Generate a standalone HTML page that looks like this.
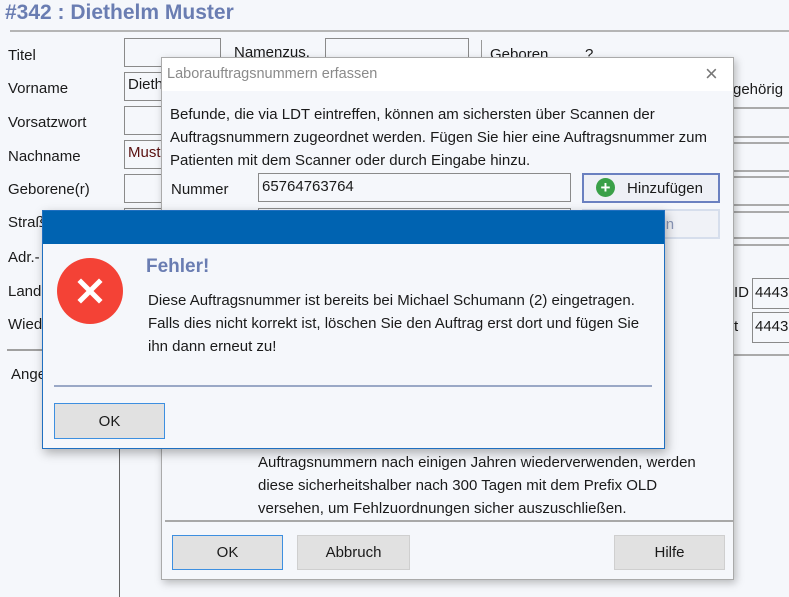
<!DOCTYPE html>
<html><head><meta charset="utf-8"><style>
*{margin:0;padding:0;box-sizing:border-box}
body{width:789px;height:597px;overflow:hidden;background:#f5f7fb;font-family:"Liberation Sans",sans-serif;font-size:15px;color:#1a1a1a;position:relative}
.a{position:absolute;white-space:nowrap}
.box{position:absolute;border:1px solid #8a8a8a;background:#f5f7fb}
.hl{position:absolute;height:2px;background:#c8c8c8}
.btn{position:absolute;background:#e1e1e1;border:1px solid #cfcfcf;text-align:center;font-size:15px}
</style></head><body>
<div class="a" style="left:5px;top:1px;font-size:21px;font-weight:bold;color:#6a7db2">#342 : Diethelm Muster</div>
<div class="hl" style="left:10px;top:30px;width:779px;background:#b5b5b5"></div>
<div class="a" style="left:8px;top:47px">Titel</div>
<div class="a" style="left:8px;top:80px">Vorname</div>
<div class="a" style="left:8px;top:114px">Vorsatzwort</div>
<div class="a" style="left:8px;top:148px">Nachname</div>
<div class="a" style="left:8px;top:181px">Geborene(r)</div>
<div class="a" style="left:8px;top:214px">Straße</div>
<div class="a" style="left:8px;top:249px">Adr.-</div>
<div class="a" style="left:8px;top:283px">Land</div>
<div class="a" style="left:8px;top:316px">Wied</div>
<div class="hl" style="left:7px;top:349px;width:40px;background:#a0a0a0"></div>
<div class="a" style="left:11px;top:366px">Angeb</div>
<div style="position:absolute;left:119px;top:350px;width:1px;height:247px;background:#666"></div>
<div class="box" style="left:124px;top:38px;width:97px;height:29px"></div>
<div class="box" style="left:124px;top:72px;width:97px;height:29px;padding:3px">Diethelm</div>
<div class="box" style="left:124px;top:106px;width:97px;height:29px"></div>
<div class="box" style="left:124px;top:140px;width:97px;height:29px;padding:3px;color:#5a1010">Muster</div>
<div class="box" style="left:124px;top:174px;width:97px;height:29px"></div>
<div class="box" style="left:124px;top:208px;width:97px;height:29px"></div>
<div class="a" style="left:234px;top:44px">Namenzus.</div>
<div class="box" style="left:325px;top:38px;width:144px;height:29px"></div>
<div style="position:absolute;left:481px;top:40px;width:1px;height:26px;background:#999"></div>
<div class="a" style="left:490px;top:46px">Geboren</div><div class="a" style="left:585px;top:46px">?</div>
<div class="a" style="left:733px;top:81px">gehörig</div>
<div class="hl" style="left:734px;top:107px;width:55px;background:#aaa"></div>
<div class="hl" style="left:734px;top:136px;width:55px;background:#aaa"></div>
<div class="hl" style="left:734px;top:142px;width:55px;background:#aaa"></div>
<div class="hl" style="left:734px;top:170px;width:55px;background:#aaa"></div>
<div class="hl" style="left:734px;top:176px;width:55px;background:#aaa"></div>
<div class="hl" style="left:734px;top:204px;width:55px;background:#aaa"></div>
<div class="hl" style="left:734px;top:211px;width:55px;background:#aaa"></div>
<div class="hl" style="left:734px;top:237px;width:55px;background:#aaa"></div>
<div class="hl" style="left:734px;top:244px;width:55px;background:#aaa"></div>
<div class="a" style="left:734px;top:284px">ID</div>
<div class="box" style="left:752px;top:278px;width:40px;height:31px;padding:5px 2px">4443</div>
<div class="a" style="left:734px;top:318px">t</div>
<div class="box" style="left:752px;top:312px;width:40px;height:31px;padding:5px 2px">4443</div>
<div class="hl" style="left:734px;top:354px;width:55px;background:#aaa"></div>

<!-- dialog 1 -->
<div style="position:absolute;left:161px;top:57px;width:573px;height:523px;background:#f5f7fb;border:1px solid #aaa;box-shadow:2px 3px 8px rgba(0,0,0,.25)">
<div style="position:absolute;left:0;top:0;width:571px;height:33px;background:#fff"></div>
<div class="a" style="left:5px;top:8px;color:#8a8a8a;font-size:14.5px">Laborauftragsnummern erfassen</div>
<div class="a" style="left:543px;top:3px;color:#777;font-size:22px;font-weight:200">×</div>
<div class="a" style="left:8px;top:45px;line-height:23px">Befunde, die via LDT eintreffen, können am sichersten über Scannen der<br>Auftragsnummern zugeordnet werden. Fügen Sie hier eine Auftragsnummer zum<br>Patienten mit dem Scanner oder durch Eingabe hinzu.</div>
<div class="a" style="left:9px;top:123px">Nummer</div>
<div class="box" style="left:96px;top:115px;width:313px;height:29px;padding:4px 3px">65764763764</div>
<div class="btn" style="left:420px;top:115px;width:138px;height:30px;border:2px solid #6a80c0;background:#eef0f6;padding-top:5px;padding-left:28px">Hinzufügen</div>
<div style="position:absolute;left:434px;top:120px;width:19px;height:19px;border-radius:50%;background:#3aa048;color:#fff;font-weight:bold;font-size:17px;line-height:19px;text-align:center">+</div>
<div class="box" style="left:96px;top:150px;width:313px;height:29px"></div>
<div class="btn" style="left:420px;top:151px;width:138px;height:30px;border:2px solid #d6deec;background:#f0f2f7;color:#8a97b8;padding-top:5px;padding-left:25px;text-align:left;overflow:hidden;white-space:nowrap">Entfernen</div>
<div class="a" style="left:96px;top:393px;line-height:23px">Auftragsnummern nach einigen Jahren wiederverwenden, werden<br>diese sicherheitshalber nach 300 Tagen mit dem Prefix OLD<br>versehen, um Fehlzuordnungen sicher auszuschließen.</div>
<div class="hl" style="left:3px;top:462px;width:569px;background:#a8a8a8"></div>
<div class="btn" style="left:10px;top:477px;width:111px;height:35px;border:1px solid #3d8fe0;padding-top:8px">OK</div>
<div class="btn" style="left:135px;top:477px;width:113px;height:35px;padding-top:8px">Abbruch</div>
<div class="btn" style="left:452px;top:477px;width:111px;height:35px;padding-top:8px">Hilfe</div>
</div>

<!-- dialog 2 -->
<div style="position:absolute;left:42px;top:210px;width:623px;height:239px;background:#f5f7fb;border:1px solid #1f6fc0;box-shadow:2px 4px 10px rgba(0,0,0,.3)">
<div style="position:absolute;left:0;top:0;width:621px;height:33px;background:#0063b1"></div>
<div style="position:absolute;left:14px;top:47px;width:66px;height:66px;border-radius:50%;background:#f44236"></div>
<svg style="position:absolute;left:34px;top:67px" width="26" height="26" viewBox="0 0 26 26"><path d="M4 4L22 22M22 4L4 22" stroke="#fff" stroke-width="5" stroke-linecap="square"/></svg>
<div class="a" style="left:103px;top:45px;font-size:19px;font-weight:bold;color:#6a7db2">Fehler!</div>
<div class="a" style="left:105px;top:78px;line-height:23px">Diese Auftragsnummer ist bereits bei Michael Schumann (2) eingetragen.<br>Falls dies nicht korrekt ist, löschen Sie den Auftrag erst dort und fügen Sie<br>ihn dann erneut zu!</div>
<div style="position:absolute;left:11px;top:174px;width:598px;height:2px;background:#9aa8c6"></div>
<div class="btn" style="left:11px;top:192px;width:111px;height:36px;border:1px solid #3d8fe0;padding-top:9px">OK</div>
</div>
</body></html>
